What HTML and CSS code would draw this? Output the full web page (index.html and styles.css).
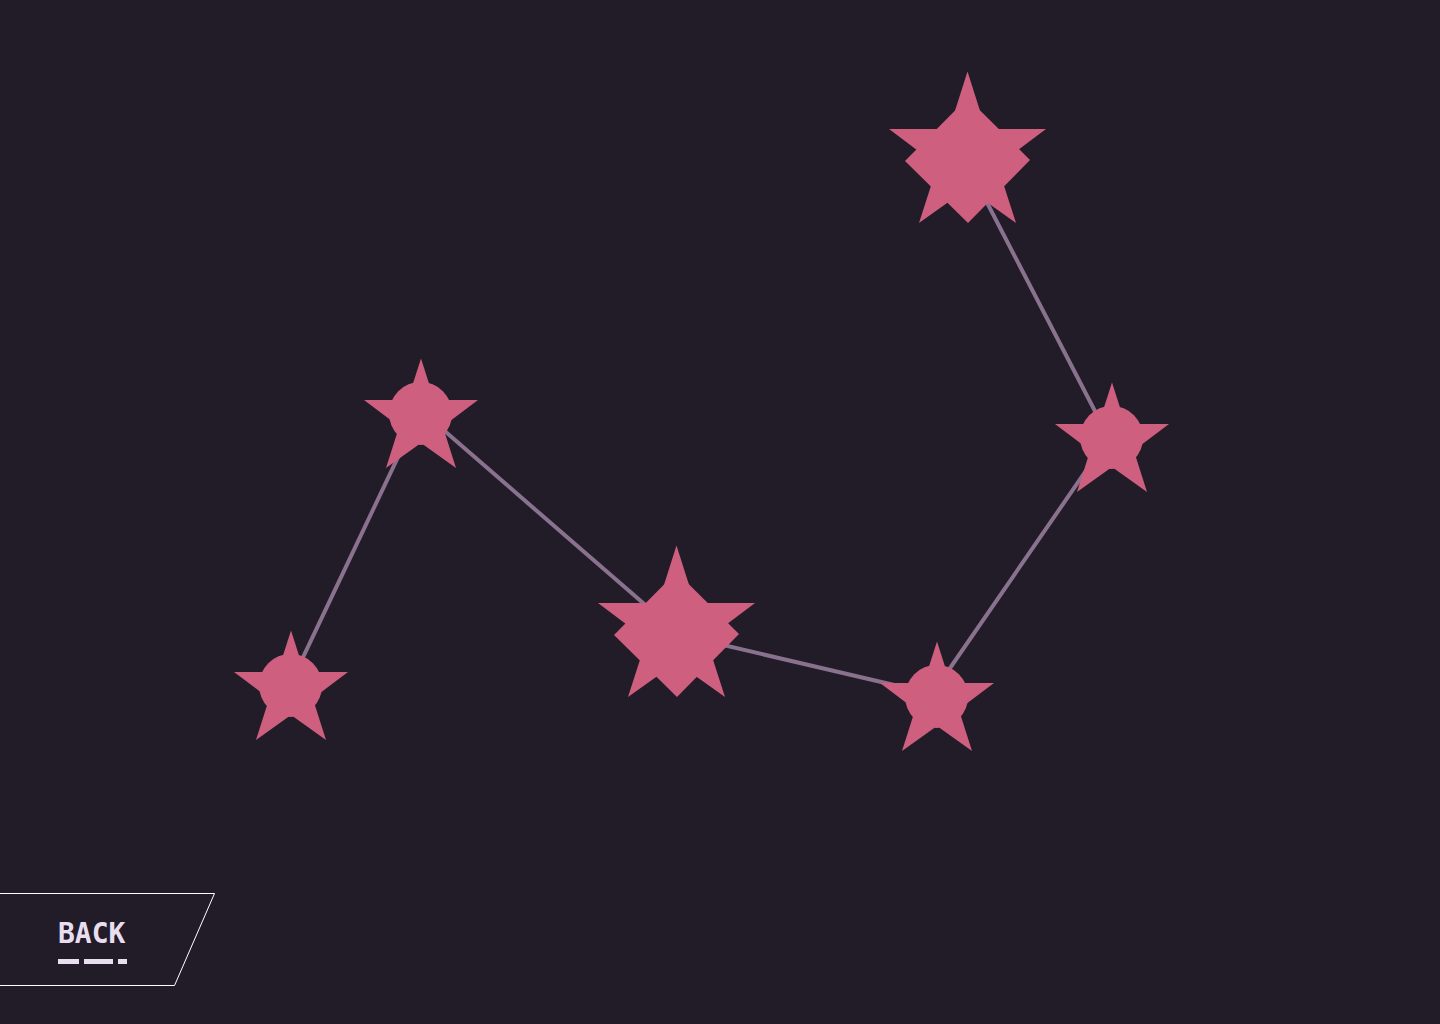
FILE: index.html
```html
<!DOCTYPE html>
<html lang="en">
<head>
<meta charset="utf-8">
<meta name="viewport" content="width=device-width, initial-scale=1">
<title>Constellation</title>
<link rel="stylesheet" href="styles.css">
</head>
<body>
<main class="sky">
  <svg class="constellation" viewBox="0 0 1440 893" role="img" aria-label="Constellation of six stars">
    <defs>
      <g id="star-small">
        <path d="M0-54.5 13.3-13H57L21.8 13.5 35 55 0 30-35 55-21.8 13.5-57-13H-13.3Z"/>
        <circle cx="-.4" cy=".4" r="31.5"/>
      </g>
      <g id="star-large">
        <path d="M0-82 18.3-24.5H78.5L30 12 48.5 69.5 0 35-48.5 69.5-30 12-78.5-24.5H-18.3Z"/>
        <path d="M0-55.5 62.5 6.5.5 69.5-62.500 7.5Z"/>
      </g>
    </defs>
    <path class="links" d="M291 682.6 421 408.600M421 410.500 676 631.600M676 634 937 695M937 687 1112 433M1112 444 967 164"/>
    <g class="stars">
      <use href="#star-small" x="291" y="685"/>
      <use href="#star-small" x="421" y="413"/>
      <use href="#star-large" x="676.5" y="627.5"/>
      <use href="#star-small" x="937" y="696"/>
      <use href="#star-small" x="1112" y="437"/>
      <use href="#star-large" x="967.5" y="153.5"/>
    </g>
  </svg>
</main>
<nav class="nav">
  <button class="back" type="button">
    <svg class="back-frame" viewBox="0 0 215 93" aria-hidden="true"><path d="M-2 .5H214.5L174.500 92.500H-2"/></svg>
    <span class="back-label">BACK</span>
    <span class="back-rules" aria-hidden="true"><i></i><i></i><i></i></span>
  </button>
</nav>
</body>
</html>
```
FILE: styles.css
```css
* {
  box-sizing: border-box;
}

body {
  margin: 0;
  min-height: 100vh;
  display: flex;
  flex-direction: column;
  background: #221c29;
}

.constellation {
  display: block;
  width: 100%;
}

.links {
  fill: none;
  stroke: #8a728f;
  stroke-width: 4;
}

.stars {
  fill: #ce5f7f;
}

.nav {
  padding-bottom: 38px;
}

.back {
  position: relative;
  display: flex;
  flex-direction: column;
  align-items: flex-start;
  gap: 4px;
  width: 215px;
  height: 93px;
  padding: 20px 58px;
  border: 0;
  background: none;
  color: #e8def0;
  cursor: pointer;
}

.back-frame {
  position: absolute;
  inset: 0;
  width: 215px;
  height: 93px;
  fill: none;
  stroke: #fff;
}

.back-label {
  font: bold 28px/42px "DejaVu Sans Mono", "Liberation Mono", monospace;
}

.back-rules {
  display: grid;
  grid-template-columns: 21px 29px 9px;
  gap: 5px;
}

.back-rules i {
  height: 5px;
  background: #e8def0;
}
```
